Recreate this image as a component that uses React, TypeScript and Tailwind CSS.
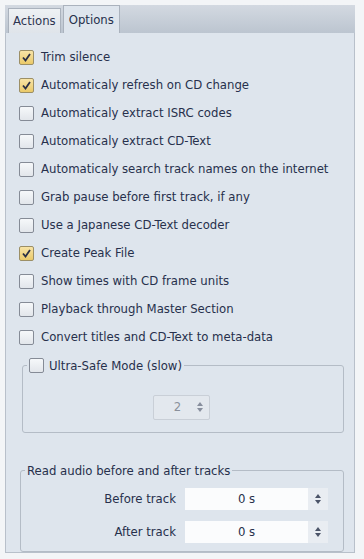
const options: { label: string; checked: boolean }[] = [
  { label: "Trim silence", checked: true },
  { label: "Automaticaly refresh on CD change", checked: true },
  { label: "Automaticaly extract ISRC codes", checked: false },
  { label: "Automaticaly extract CD-Text", checked: false },
  { label: "Automaticaly search track names on the internet", checked: false },
  { label: "Grab pause before first track, if any", checked: false },
  { label: "Use a Japanese CD-Text decoder", checked: false },
  { label: "Create Peak File", checked: true },
  { label: "Show times with CD frame units", checked: false },
  { label: "Playback through Master Section", checked: false },
  { label: "Convert titles and CD-Text to meta-data", checked: false },
];

function Check({ checked }: { checked: boolean }) {
  return (
    <span
      className={
        checked
          ? "flex h-[15px] w-[15px] shrink-0 items-center justify-center rounded-[2px] border border-[#9c8f66] bg-gradient-to-b from-[#f8e4a6] to-[#eac968]"
          : "flex h-[15px] w-[15px] shrink-0 items-center justify-center rounded-[2px] border border-[#858b96] bg-gradient-to-b from-[#f6f8fa] to-[#e2e6eb]"
      }
    >
      {checked && (
        <svg width="11" height="11" viewBox="0 0 11 11">
          <path d="M2 5.5 L4.5 8.5 L9 2" fill="none" stroke="#2a2f45" strokeWidth="1.8" />
        </svg>
      )}
    </span>
  );
}

function SpinArrows() {
  return (
    <svg width="8" height="12" viewBox="0 0 8 12">
      <path d="M4 1 L7 5 L1 5 Z" fill="#4b5468" />
      <path d="M4 11 L7 7 L1 7 Z" fill="#4b5468" />
    </svg>
  );
}

function TrackRow({ label }: { label: string }) {
  return (
    <div className="flex h-[33px] items-center">
      <span className="w-[157px] pr-[2px] text-right">{label}</span>
      <div className="ml-[7px] flex h-[22px] w-[143px] items-stretch">
        <div className="flex w-[123px] items-center justify-center bg-[#fbfcfd]">0 s</div>
        <div className="flex w-[20px] items-center justify-center bg-[#e9edf2]">
          <SpinArrows />
        </div>
      </div>
    </div>
  );
}

export default function App() {
  return (
    <div
      className="flex h-[559px] w-[364px] flex-col bg-[#f3f5f7] pl-[5px] pr-[9px] pt-[5px] pb-[6px] text-[13px] text-[#27304c]"
      style={{ fontFamily: "Tahoma, 'DejaVu Sans Condensed', 'Liberation Sans', sans-serif" }}
    >
      {/* tab strip */}
      <div className="flex h-[28px] items-end bg-gradient-to-b from-[#d3d9e1] to-[#bcc5d0]">
        <div className="ml-[3px] flex h-[25px] items-center border border-b-0 border-[#aab2bd] bg-gradient-to-b from-[#eef1f4] to-[#dfe4ea] px-[4px] text-[#2d3550]">
          Actions
        </div>
        <div className="ml-[2px] flex h-[28px] items-center border border-b-0 border-[#aab2bd] bg-[#dee5ed] px-[5px]">
          Options
        </div>
      </div>

      {/* panel */}
      <div className="flex flex-1 flex-col border border-t-0 border-[#b8c0ca] bg-[#dee5ed] pl-[13px] pr-[10px] pt-[10px]">
        <div className="flex flex-col">
          {options.map((o) => (
            <div key={o.label} className="flex h-[28px] items-center gap-[7px]">
              <Check checked={o.checked} />
              <span className="whitespace-nowrap">{o.label}</span>
            </div>
          ))}
        </div>

        <fieldset className="ml-[3px] mt-[5px] h-[77px] rounded-[3px] border border-[#b4bcc6] px-0 pb-0">
          <legend className="ml-[4px] flex items-center gap-[5px] px-[2px]">
            <Check checked={false} />
            <span>Ultra-Safe Mode (slow)</span>
          </legend>
          <div className="flex justify-center pt-[19px] pr-[3px]">
            <div className="flex h-[25px] w-[57px] items-center rounded-[2px] border border-[#c9cfd7] bg-[#e3e8ee] text-[#8a909b]">
              <span className="flex-1 pl-[10px] text-center">2</span>
              <span className="flex w-[18px] justify-center opacity-60">
                <SpinArrows />
              </span>
            </div>
          </div>
        </fieldset>

        <fieldset className="ml-[1px] mt-[28px] h-[91px] rounded-[3px] border border-[#b4bcc6] px-0 pb-0">
          <legend className="ml-[4px] px-[2px]">Read audio before and after tracks</legend>
          <div className="flex flex-col pt-[2px]">
            <TrackRow label="Before track" />
            <TrackRow label="After track" />
          </div>
        </fieldset>
      </div>
    </div>
  );
}
